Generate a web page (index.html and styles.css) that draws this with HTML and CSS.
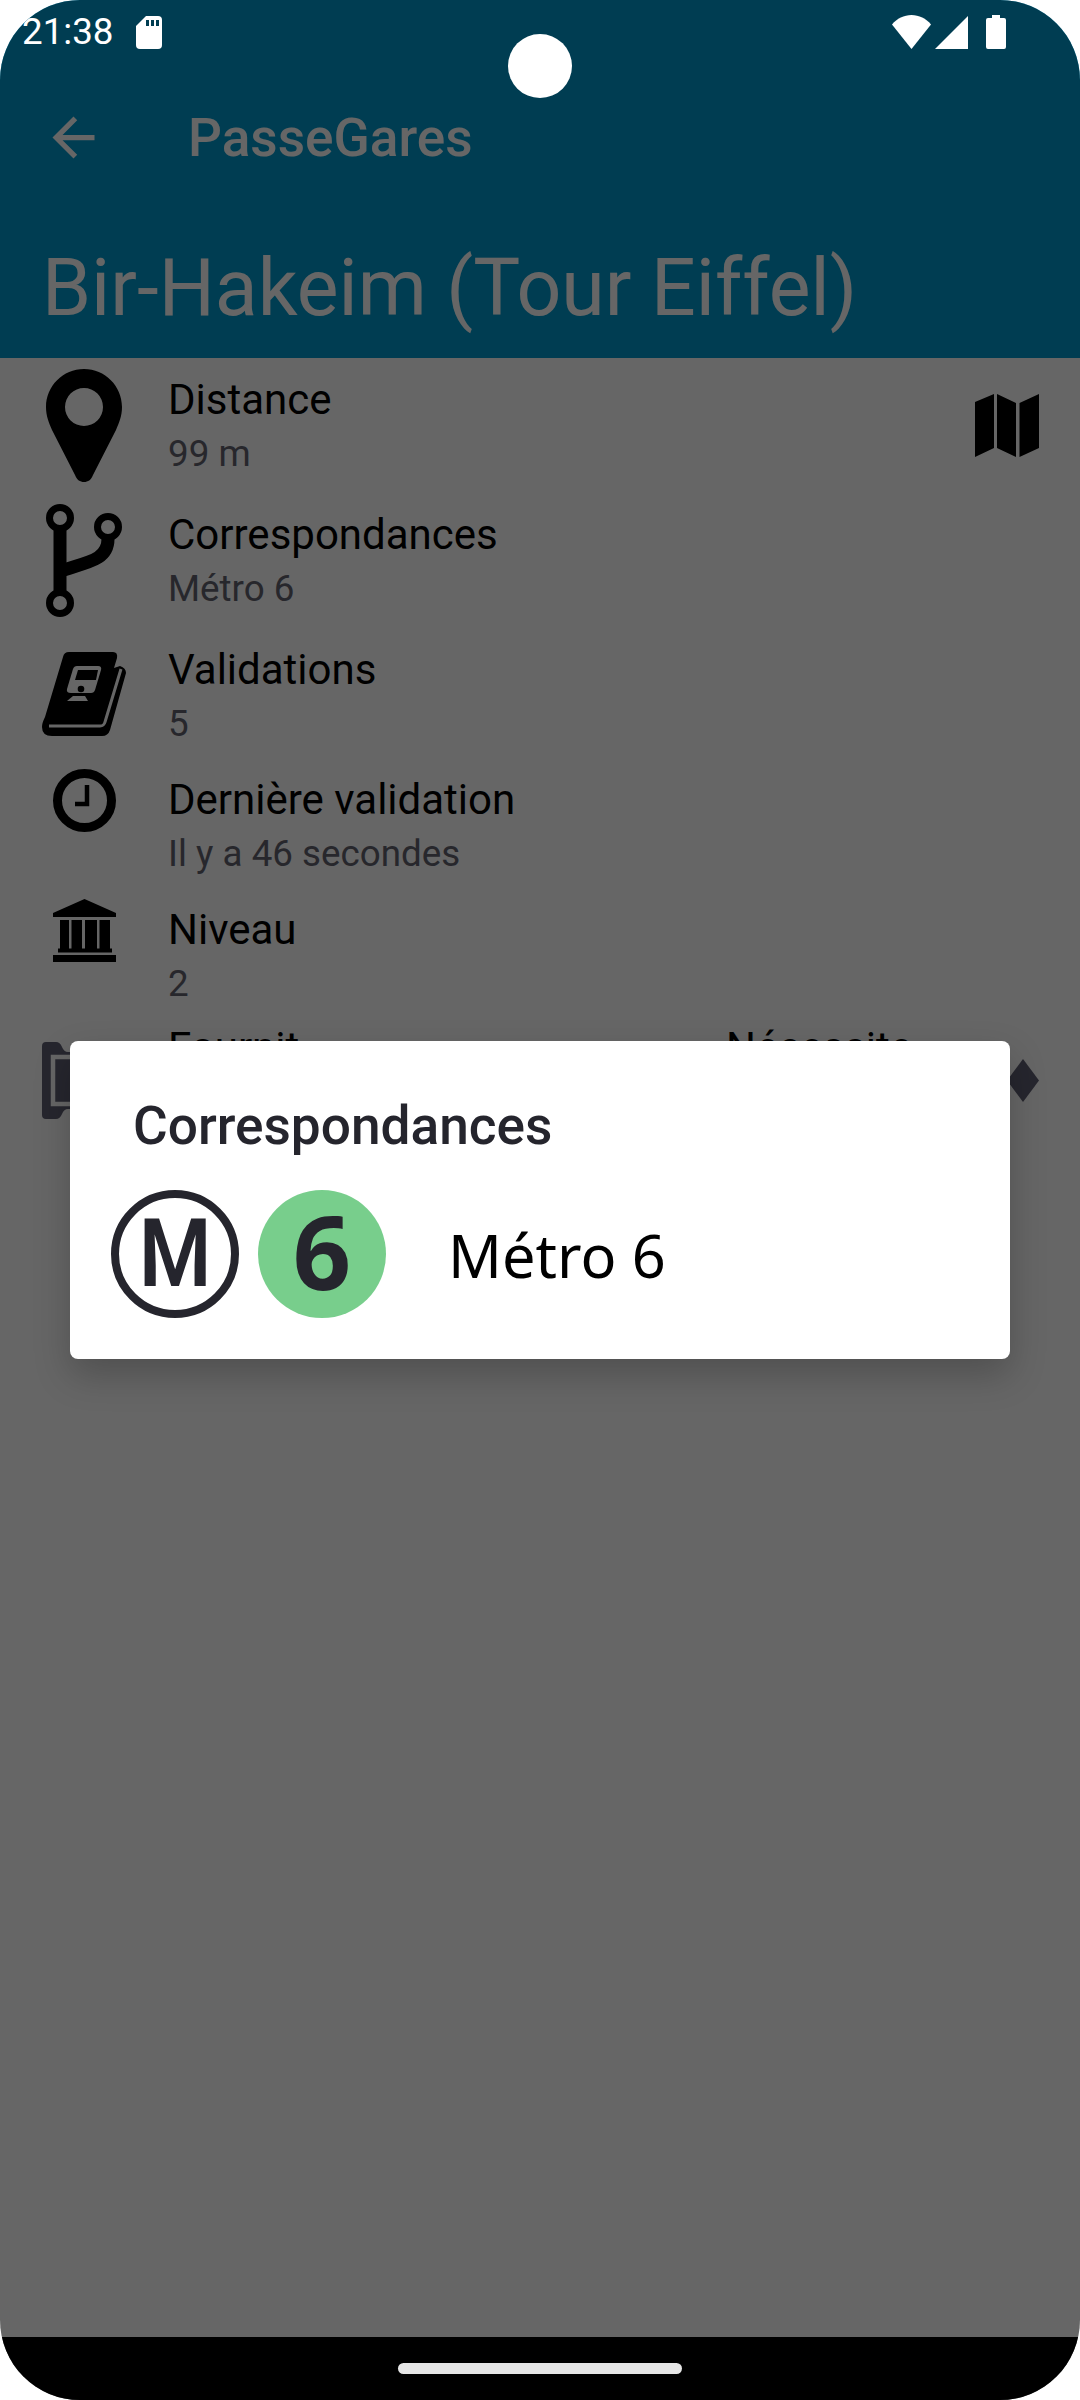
FILE: index.html
```html
<!DOCTYPE html>
<html lang="fr">

<head>
    <meta charset="UTF-8">
    <meta name="viewport" content="width=device-width, initial-scale=1.0">
    <title>PasseGares</title>
    <link rel="stylesheet" href="styles.css">
</head>

<body>
    <div class="phone">
        <header class="appbar">
            <div class="status-bar">
                <span class="clock-text">21:38</span>
                <svg class="sd-icon" viewBox="0 0 26 33">
                    <path fill="#fff" d="M10 0H22Q26 0 26 4V29Q26 33 22 33H4Q0 33 0 29V10Z" />
                    <path fill="#003d52" d="M10 4h3v6h-3zM15 4h3v6h-3zM20 4h3v6h-3z" />
                </svg>
                <div class="status-right">
                    <svg class="wifi-icon" viewBox="0 0 39 34">
                        <path fill="#fff" d="M19.5 34L0 9.5C5 3.5 12 0 19.5 0S34 3.5 39 9.5Z" />
                    </svg>
                    <svg class="signal-icon" viewBox="0 0 33 33">
                        <path fill="#fff" d="M0 33L33 0V33Z" />
                    </svg>
                    <svg class="battery-icon" viewBox="0 0 20 34">
                        <path fill="#fff" d="M6 0H14V3H18Q20 3 20 5V32Q20 34 18 34H2Q0 34 0 32V5Q0 3 2 3H6Z" />
                    </svg>
                </div>
            </div>
            <div class="toolbar">
                <svg class="back-icon" viewBox="0 0 24 24">
                    <path fill="#fff" d="M20 11H7.83l5.59-5.59L12 4l-8 8 8 8 1.41-1.41L7.83 13H20v-2z" />
                </svg>
                <span class="app-name">PasseGares</span>
            </div>
            <h1 class="station-name">Bir-Hakeim (Tour Eiffel)</h1>
        </header>

        <main class="details">
            <div class="row row-tall">
                <div class="row-icon">
                    <svg class="icon-pin" viewBox="0 0 76 113">
                        <path fill-rule="evenodd" d="M38 0C59 0 76 17 76 38C76 47 73 54 70 61L47 106C45 111 42 113 38 113C34 113 31 111 29 106L6 61C3 54 0 47 0 38C0 17 17 0 38 0ZM38 19A19 19 0 1 0 38 57A19 19 0 1 0 38 19Z" />
                    </svg>
                </div>
                <div class="row-text">
                    <div class="label">Distance</div>
                    <div class="value">99 m</div>
                </div>
                <svg class="icon-map" viewBox="0 0 64 63">
                    <path d="M0 8L19 0V54L0 63ZM22 0L41 9V63L22 54ZM44.500 9L64 0V54L44.500 63Z" />
                </svg>
            </div>

            <div class="row row-tall">
                <div class="row-icon">
                    <svg class="icon-branch" viewBox="0 0 76 113">
                        <g fill="none" stroke="#000">
                            <circle cx="14" cy="14" r="10.500" stroke-width="7" />
                            <circle cx="62" cy="23" r="10.500" stroke-width="7" />
                            <circle cx="14" cy="99" r="10.500" stroke-width="7" />
                            <path stroke-width="13" d="M14 26V87" />
                            <path stroke-width="13" d="M62 35C62 56 42 58 14 67" />
                        </g>
                    </svg>
                </div>
                <div class="row-text">
                    <div class="label">Correspondances</div>
                    <div class="value">Métro 6</div>
                </div>
            </div>

            <div class="row">
                <div class="row-icon">
                    <svg class="icon-book" viewBox="0 0 84 85">
                        <path d="M27 1H71Q76 1 75 7L72 17L78 15Q84 17 84 22L68 79Q66 85 60 85H10Q0 85 0 76Q0 72 3 66L21 6Q22 1 27 1Z" />
                        <path fill="none" stroke="#fff" stroke-width="3" d="M7 75H58Q62 75 63 71L79 18" />
                        <path fill="#fff" d="M35 15H56Q60 15 59 19L53 39Q52 42 49 42H29Q24 42 25 38L31 18Q32 15 35 15Z" />
                        <path d="M36 19H56L54 29H33Z" />
                        <circle cx="39" cy="38" r="3.300" />
                        <path fill="#fff" d="M25 50L31 45H43L46 50Z" />
                    </svg>
                </div>
                <div class="row-text">
                    <div class="label">Validations</div>
                    <div class="value">5</div>
                </div>
            </div>

            <div class="row">
                <div class="row-icon">
                    <svg class="icon-small" viewBox="0 0 63 63">
                        <circle cx="31.500" cy="31.500" r="27" fill="none" stroke="#000" stroke-width="9" />
                        <path fill="none" stroke="#000" stroke-width="4.500" d="M34 16V35H22" />
                    </svg>
                </div>
                <div class="row-text">
                    <div class="label">Dernière validation</div>
                    <div class="value">Il y a 46 secondes</div>
                </div>
            </div>

            <div class="row row-short">
                <div class="row-icon">
                    <svg class="icon-small" viewBox="0 0 63 63">
                        <path d="M31.500 0L63 14V18H0V14Z" />
                        <path d="M7 21H16V50H7ZM18.500 21H29V50H18.500ZM32 21H44V50H32ZM46.500 21H57V50H46.500Z" />
                        <path d="M5 49.500H59V53.500H5ZM0 56H63V63H0Z" />
                    </svg>
                </div>
                <div class="row-text">
                    <div class="label">Niveau</div>
                    <div class="value">2</div>
                </div>
            </div>

            <div class="row row-last">
                <div class="row-icon row-icon-center">
                    <svg class="icon-ticket" viewBox="0 0 84 77">
                        <path fill="#5f5f73" d="M4 0H14Q18 0 20 5Q22 10 26 10H58Q62 10 64 5Q66 0 70 0H80Q84 0 84 4V73Q84 77 80 77H70Q66 77 64 72Q62 67 58 67H26Q22 67 20 72Q18 77 14 77H4Q0 77 0 73V4Q0 0 4 0Z" />
                        <rect x="11" y="15" width="62" height="47" fill="none" stroke="#fff" stroke-width="4.500" />
                    </svg>
                </div>
                <div class="row-text half">
                    <div class="label">Fournit</div>
                </div>
                <div class="row-text">
                    <div class="label">Nécessite</div>
                </div>
                <span class="diamond"></span>
            </div>
        </main>

        <footer class="nav-bar">
            <span class="nav-pill"></span>
        </footer>

        <div class="scrim">
            <div class="dialog">
                <h2 class="dialog-title">Correspondances</h2>
                <div class="dialog-line">
                    <span class="mode-badge"><span class="mode-letter">M</span></span>
                    <span class="line-badge">6</span>
                    <span class="line-name">Métro 6</span>
                </div>
            </div>
        </div>

        <span class="camera"></span>
    </div>
</body>

</html>
```

FILE: styles.css
```css
html, body {
    margin: 0;
    padding: 0;
    background: white;
}

body {
    font-family: 'Roboto', sans-serif;
    color: black;
}

svg {
    display: block;
}

.phone {
    position: relative;
    width: 1080px;
    height: 2400px;
    border-radius: 80px;
    overflow: hidden;
    display: flex;
    flex-direction: column;
    background: white;
}

/* Barre du haut */
.appbar {
    background: #0099cc;
    color: white;
}

.status-bar {
    position: relative;
    z-index: 20;
    height: 64px;
    padding: 0 74px 0 22px;
    display: flex;
    align-items: center;
    font-size: 36.75px;
}

.clock-text {
    line-height: 1;
}

.sd-icon {
    width: 26px;
    height: 33px;
    margin-left: 22px;
}

.status-right {
    margin-left: auto;
    display: flex;
    align-items: center;
}

.wifi-icon {
    width: 39px;
    height: 34px;
}

.signal-icon {
    width: 33px;
    height: 33px;
    margin-left: 4px;
}

.battery-icon {
    width: 20px;
    height: 34px;
    margin-left: 18px;
}

.camera {
    position: absolute;
    z-index: 30;
    top: 34px;
    left: 508px;
    width: 64px;
    height: 64px;
    border-radius: 50%;
    background: white;
}

.toolbar {
    height: 147px;
    padding-left: 42px;
    display: flex;
    align-items: center;
}

.back-icon {
    width: 63px;
    height: 63px;
}

.app-name {
    margin-left: 83px;
    font-size: 53.2px;
    font-weight: 500;
}

.station-name {
    margin: 0;
    height: 147px;
    padding-left: 42px;
    font-size: 78.75px;
    font-weight: 400;
    line-height: 155px;
}

/* Liste des infos */
.details {
    flex: 1;
    background: white;
}

.row {
    height: 130px;
    padding: 0 41px 0 42px;
    display: flex;
    align-items: flex-start;
}

.row-tall {
    height: 135px;
}

.row-short {
    height: 118px;
}

.row-last {
    height: 148px;
}

.row-icon {
    width: 84px;
    margin-right: 42px;
    padding-top: 11px;
    display: flex;
    justify-content: center;
}

.row-icon-center {
    padding-top: 36px;
}

.row-text {
    padding-top: 17px;
}

.row-text.half {
    width: 558px;
}

.label {
    font-size: 42px;
    line-height: 49px;
}

.value {
    margin-top: 8px;
    font-size: 36.75px;
    line-height: 43px;
    color: #63636f;
}

.icon-pin, .icon-branch {
    width: 76px;
    height: 113px;
}

.icon-book {
    width: 84px;
    height: 85px;
    margin-top: 12px;
}

.icon-small {
    width: 63px;
    height: 63px;
}

.icon-ticket {
    width: 84px;
    height: 77px;
}

.icon-map {
    width: 64px;
    height: 63px;
    margin-left: auto;
    align-self: center;
}

.diamond {
    margin: 53px 0 0 auto;
    width: 32px;
    height: 43px;
    background: #5f5f73;
    clip-path: polygon(50% 0, 100% 50%, 50% 100%, 0 50%);
}

/* Barre de navigation */
.nav-bar {
    position: relative;
    z-index: 20;
    height: 63px;
    background: black;
    display: flex;
    align-items: center;
    justify-content: center;
}

.nav-pill {
    width: 284px;
    height: 11px;
    border-radius: 6px;
    background: #e6e6e6;
}

/* Dialogue */
.scrim {
    position: absolute;
    z-index: 10;
    top: 0;
    left: 0;
    right: 0;
    bottom: 0;
    background: rgba(0, 0, 0, 0.6);
    display: flex;
    align-items: center;
    justify-content: center;
}

.dialog {
    width: 940px;
    height: 318px;
    box-sizing: border-box;
    padding-top: 54px;
    background: white;
    border-radius: 8px;
    box-shadow: 0 16px 36px rgba(0, 0, 0, 0.22);
}

.dialog-title {
    margin: 0 0 33px 63px;
    font-size: 53.2px;
    font-weight: 500;
    color: #25252d;
}

.dialog-line {
    padding-left: 41px;
    display: flex;
    align-items: center;
}

.mode-badge, .line-badge {
    width: 128px;
    height: 128px;
    box-sizing: border-box;
    border-radius: 50%;
    display: flex;
    align-items: center;
    justify-content: center;
    color: #25252d;
}

.mode-badge {
    border: 8px solid #25252d;
    font-size: 94px;
    font-weight: 600;
}

.mode-letter {
    display: inline-block;
    transform: scaleX(0.88);
}

.line-badge {
    margin-left: 19px;
    padding-bottom: 8px;
    background: #78ce8c;
    font-family: 'Open Sans', sans-serif;
    font-size: 102px;
    font-weight: 700;
}

.line-name {
    margin-left: 62px;
    font-family: 'Noto Sans', sans-serif;
    font-size: 59.5px;
}
```
